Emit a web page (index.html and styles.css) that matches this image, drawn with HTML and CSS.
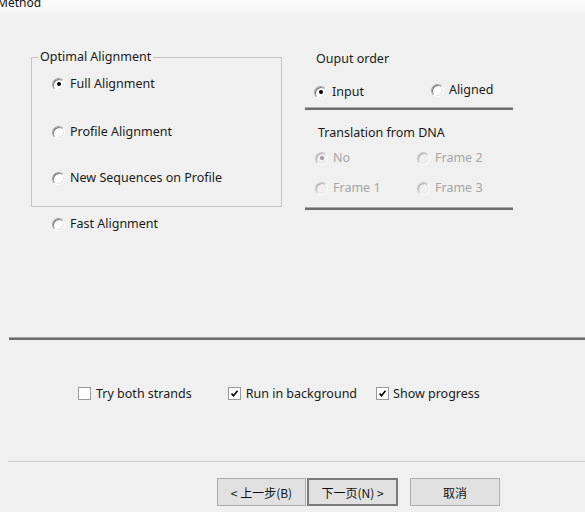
FILE: index.html
```html
<!DOCTYPE html>
<html>
<head>
<meta charset="utf-8">
<link rel="stylesheet" href="styles.css">
</head>
<body>
<div class="top"><span class="title">Method</span></div>
<div class="main">
  <div class="left">
    <fieldset class="group">
      <legend>Optimal Alignment</legend>
      <div class="opt first"><span class="radio on"></span><span>Full Alignment</span></div>
      <div class="opt second"><span class="radio"></span><span>Profile Alignment</span></div>
      <div class="opt third"><span class="radio"></span><span>New Sequences on Profile</span></div>
    </fieldset>
    <div class="opt fast"><span class="radio"></span><span>Fast Alignment</span></div>
  </div>
  <div class="right">
    <div class="heading h1">Ouput order</div>
    <div class="order">
      <div class="opt input"><span class="radio on"></span><span>Input</span></div>
      <div class="opt aligned"><span class="radio"></span><span>Aligned</span></div>
    </div>
    <div class="rule"></div>
    <div class="heading h2">Translation from DNA</div>
    <div class="frames">
      <div class="opt dis"><span class="radio on"></span><span>No</span></div>
      <div class="opt dis"><span class="radio"></span><span>Frame 2</span></div>
      <div class="opt dis"><span class="radio"></span><span>Frame 1</span></div>
      <div class="opt dis"><span class="radio"></span><span>Frame 3</span></div>
    </div>
    <div class="rule r2"></div>
  </div>
</div>
<div class="sep-thick"></div>
<div class="checks">
  <div class="chk c1"><span class="box"></span><span>Try both strands</span></div>
  <div class="chk c2"><span class="box"><svg width="11" height="11" viewBox="0 0 11 11"><path d="M2.5 5.5 L4.5 7.8 L8.5 2.8" fill="none" stroke="#000" stroke-width="1.6"/></svg></span><span>Run in background</span></div>
  <div class="chk c3"><span class="box"><svg width="11" height="11" viewBox="0 0 11 11"><path d="M2.5 5.5 L4.5 7.8 L8.5 2.8" fill="none" stroke="#000" stroke-width="1.6"/></svg></span><span>Show progress</span></div>
</div>
<div class="sep-thin"></div>
<div class="buttons">
  <button class="btn">&lt; 上一步(B)</button>
  <button class="btn def">下一页(N) &gt;</button>
  <button class="btn cancel">取消</button>
</div>
</body>
</html>
```
FILE: styles.css
```css
html, body {
  margin: 0;
  padding: 0;
}
body {
  width: 585px;
  height: 512px;
  overflow: hidden;
  background: #f0f0f0;
  font-family: "Noto Sans", "Noto Sans CJK SC", sans-serif;
  font-size: 12.5px;
  color: #1a1a1a;
}
.top {
  height: 16px;
  overflow: hidden;
  background: linear-gradient(#fbfbfb 0, #f8f8f8 9px, #f0f0f0 16px);
}
.title {
  display: block;
  margin-top: -4px;
  margin-left: -3px;
  font-size: 12px;
  line-height: 14px;
  color: #111;
}
.main {
  display: flex;
  height: 321px;
}
.left {
  margin-left: 31px;
  width: 251px;
  padding-top: 33px;
}
.group {
  margin: 0;
  padding: 0 0 18px 0;
  border: 1px solid #c4c4c4;
  height: 138px;
  box-sizing: content-box;
  min-width: 0;
}
.group legend {
  margin-left: 6px;
  padding: 0 2px;
  line-height: 16px;
  font-size: 12.5px;
}
.group .opt {
  margin-left: 20px;
}
.opt {
  display: flex;
  align-items: center;
  height: 18px;
  line-height: 18px;
  white-space: nowrap;
}
.opt .radio {
  margin-right: 5px;
}
.first { margin-top: 10px; }
.second { margin-top: 30px; }
.third { margin-top: 28px; }
.fast {
  margin-top: 8px;
  margin-left: 21px;
}
.radio {
  position: relative;
  flex: none;
  width: 11px;
  height: 11px;
  border-radius: 50%;
  border: 1px solid;
  border-color: #a0a0a0 #ffffff #ffffff #a0a0a0;
  background: #fff;
  box-shadow: inset 1px 1px 0 #7a7a7a, inset -1px -1px 0 #e3e3e3;
}
.radio.on::after {
  content: "";
  position: absolute;
  left: 3.5px;
  top: 3.5px;
  width: 4px;
  height: 4px;
  border-radius: 50%;
  background: #000;
}
.right {
  margin-left: 23px;
  width: 208px;
  padding-top: 35px;
}
.heading {
  line-height: 16px;
  height: 16px;
}
.h1 { padding-left: 11px; }
.h2 { padding-left: 13px; margin-top: 15px; }
.order {
  display: flex;
  align-items: flex-start;
  margin-top: 16px;
  height: 20px;
}
.input { margin-left: 9px; margin-top: 0; }
.aligned { margin-left: 67px; margin-top: -2px; }
.rule {
  margin-top: 4px;
  height: 2px;
  background: #6e6e6e;
  border-top: 1px solid #a8a8a8;
}
.frames {
  display: grid;
  grid-template-columns: 102px 90px;
  row-gap: 12px;
  margin-top: 8px;
  padding-left: 10px;
}
.frames .opt { height: 18px; }
.dis { color: #a6a6a6; }
.dis .radio {
  background: #f0f0f0;
  border-color: #c8c8c8 #ffffff #ffffff #c8c8c8;
  box-shadow: inset 1px 1px 0 #b4b4b4, inset -1px -1px 0 #e8e8e8;
}
.dis .radio.on::after { background: #9a9a9a; }
.r2 { margin-top: 10px; }
.sep-thick {
  margin-left: 9px;
  height: 2px;
  background: #6c6c6c;
  border-top: 1px solid #a6a6a6;
}
.checks {
  display: flex;
  align-items: center;
  height: 18px;
  margin-top: 44px;
}
.chk {
  display: flex;
  align-items: center;
  white-space: nowrap;
}
.box {
  flex: none;
  display: flex;
  align-items: center;
  justify-content: center;
  width: 11px;
  height: 11px;
  border: 1px solid #9a9a9a;
  background: #fff;
  margin-right: 5px;
}
.c1 { margin-left: 78px; }
.c2 { margin-left: 36px; }
.c3 { margin-left: 19px; }
.c2 .box { margin-right: 5px; }
.c3 .box { margin-right: 4px; }
.sep-thin {
  margin-top: 59px;
  margin-left: 8px;
  height: 1px;
  background: #c8c8c8;
  border-bottom: 1px solid #fafafa;
}
.buttons {
  display: flex;
  margin-top: 15px;
  padding-left: 217px;
}
.btn {
  box-sizing: border-box;
  width: 89px;
  height: 28px;
  margin: 0;
  padding: 0;
  border: 1px solid #adadad;
  background: #e1e1e1;
  font-family: "Noto Sans CJK SC", "Noto Sans", sans-serif;
  font-size: 12px;
  color: #111;
}
.def {
  width: 91px;
  border: 2px solid #7a7a7a;
  margin-left: 1px;
}
.cancel {
  width: 90px;
  margin-left: 12px;
}
```
